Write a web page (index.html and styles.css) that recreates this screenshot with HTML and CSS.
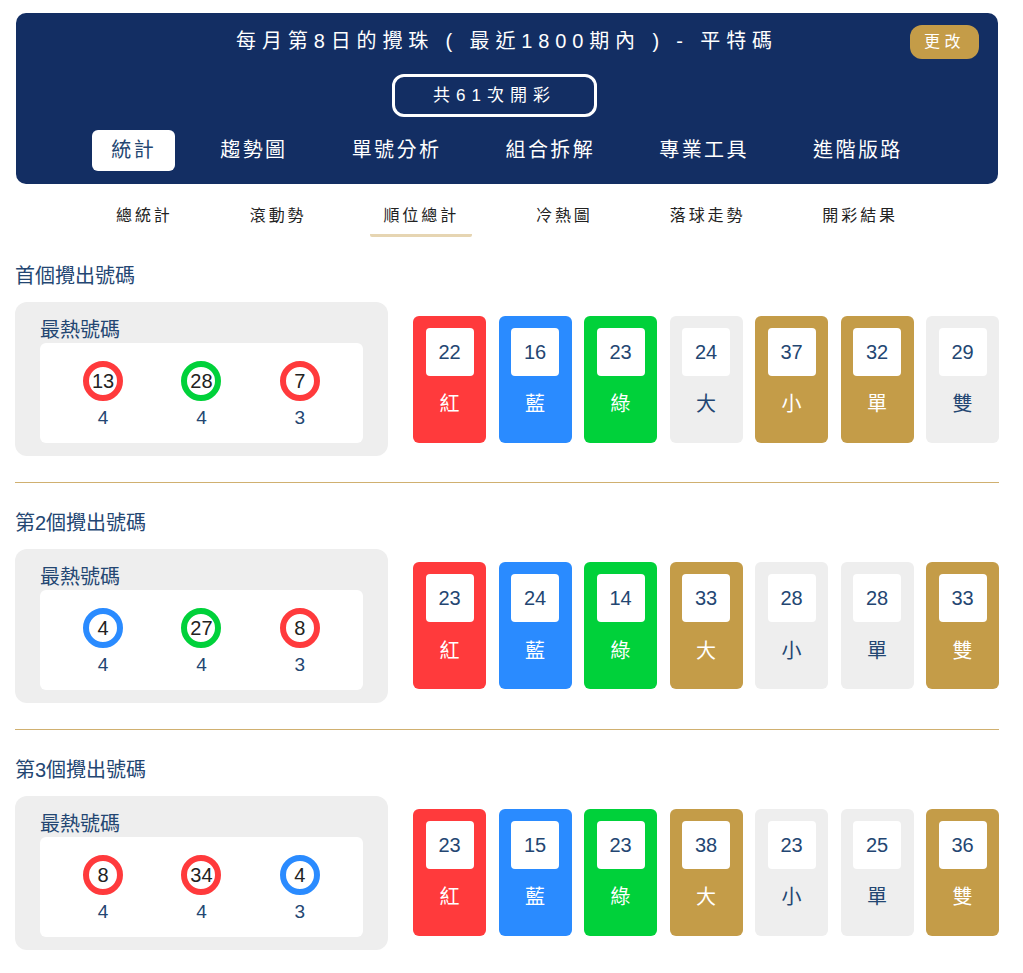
FILE: index.html
```html
<!DOCTYPE html>
<html lang="zh-Hant">
<head>
    <meta charset="UTF-8">
    <meta name="viewport" content="width=device-width, initial-scale=1.0">
    <title>順位總計</title>
    <link rel="stylesheet" href="styles.css">
</head>
<body>
<header class="head-box">
	<div class="head-title">每月第8日的攪珠 ( 最近1800期內 ) - 平特碼</div>
	<a class="change-btn">更改</a>
	<div class="head-count"><span class="count-pill">共61次開彩</span></div>
	<nav class="main-nav">
		<a class="main-item active">統計</a>
		<a class="main-item">趨勢圖</a>
		<a class="main-item">單號分析</a>
		<a class="main-item">組合拆解</a>
		<a class="main-item">專業工具</a>
		<a class="main-item">進階版路</a>
	</nav>
</header>
<nav class="sub-nav">
	<a class="sub-item">總統計</a>
	<a class="sub-item">滾動勢</a>
	<a class="sub-item active">順位總計</a>
	<a class="sub-item">冷熱圖</a>
	<a class="sub-item">落球走勢</a>
	<a class="sub-item">開彩結果</a>
</nav>

<section class="rank-box">
	<h2 class="rank-title">首個攪出號碼</h2>
	<div class="rank-row">
		<div class="hot-box">
			<div class="hot-title">最熱號碼</div>
			<ul class="hot-list">
				<li class="hot-item"><span class="ball red">13</span><span class="hot-times">4</span></li>
				<li class="hot-item"><span class="ball green">28</span><span class="hot-times">4</span></li>
				<li class="hot-item"><span class="ball red">7</span><span class="hot-times">3</span></li>
			</ul>
		</div>
		<ul class="tile-list">
			<li class="tile bg-red"><span class="tile-num">22</span><span class="tile-name">紅</span></li>
			<li class="tile bg-blue"><span class="tile-num">16</span><span class="tile-name">藍</span></li>
			<li class="tile bg-green"><span class="tile-num">23</span><span class="tile-name">綠</span></li>
			<li class="tile"><span class="tile-num">24</span><span class="tile-name">大</span></li>
			<li class="tile bg-gold"><span class="tile-num">37</span><span class="tile-name">小</span></li>
			<li class="tile bg-gold"><span class="tile-num">32</span><span class="tile-name">單</span></li>
			<li class="tile"><span class="tile-num">29</span><span class="tile-name">雙</span></li>
		</ul>
	</div>
</section>

<section class="rank-box">
	<h2 class="rank-title">第2個攪出號碼</h2>
	<div class="rank-row">
		<div class="hot-box">
			<div class="hot-title">最熱號碼</div>
			<ul class="hot-list">
				<li class="hot-item"><span class="ball blue">4</span><span class="hot-times">4</span></li>
				<li class="hot-item"><span class="ball green">27</span><span class="hot-times">4</span></li>
				<li class="hot-item"><span class="ball red">8</span><span class="hot-times">3</span></li>
			</ul>
		</div>
		<ul class="tile-list">
			<li class="tile bg-red"><span class="tile-num">23</span><span class="tile-name">紅</span></li>
			<li class="tile bg-blue"><span class="tile-num">24</span><span class="tile-name">藍</span></li>
			<li class="tile bg-green"><span class="tile-num">14</span><span class="tile-name">綠</span></li>
			<li class="tile bg-gold"><span class="tile-num">33</span><span class="tile-name">大</span></li>
			<li class="tile"><span class="tile-num">28</span><span class="tile-name">小</span></li>
			<li class="tile"><span class="tile-num">28</span><span class="tile-name">單</span></li>
			<li class="tile bg-gold"><span class="tile-num">33</span><span class="tile-name">雙</span></li>
		</ul>
	</div>
</section>

<section class="rank-box">
	<h2 class="rank-title">第3個攪出號碼</h2>
	<div class="rank-row">
		<div class="hot-box">
			<div class="hot-title">最熱號碼</div>
			<ul class="hot-list">
				<li class="hot-item"><span class="ball red">8</span><span class="hot-times">4</span></li>
				<li class="hot-item"><span class="ball red">34</span><span class="hot-times">4</span></li>
				<li class="hot-item"><span class="ball blue">4</span><span class="hot-times">3</span></li>
			</ul>
		</div>
		<ul class="tile-list">
			<li class="tile bg-red"><span class="tile-num">23</span><span class="tile-name">紅</span></li>
			<li class="tile bg-blue"><span class="tile-num">15</span><span class="tile-name">藍</span></li>
			<li class="tile bg-green"><span class="tile-num">23</span><span class="tile-name">綠</span></li>
			<li class="tile bg-gold"><span class="tile-num">38</span><span class="tile-name">大</span></li>
			<li class="tile"><span class="tile-num">23</span><span class="tile-name">小</span></li>
			<li class="tile"><span class="tile-num">25</span><span class="tile-name">單</span></li>
			<li class="tile bg-gold"><span class="tile-num">36</span><span class="tile-name">雙</span></li>
		</ul>
	</div>
</section>
</body>
</html>
```

FILE: styles.css
```css
*{
	padding:0;margin:0;box-sizing:border-box;
}
body{
	font-family:"Liberation Sans","Noto Sans CJK TC",sans-serif;
	color:#234672;
	background:#fff;
	padding:13px 24px 0 15px;
}
ul{list-style:none}

.head-box{
	position:relative;
	height:171px;
	margin-left:1px;
	margin-right:1px;
	padding-top:13px;
	background:#132e63;
	border-radius:10px;
	color:#fff;
}
.head-title{
	height:30px;
	line-height:30px;
	text-align:center;
	font-size:20px;
	letter-spacing:5.87px;
}
.change-btn{
	position:absolute;
	top:12px;right:19px;
	width:69px;height:34px;
	line-height:34px;
	text-align:center;
	font-size:16px;
	letter-spacing:4.5px;
	background:#c49c48;
	border-radius:12px;
}
.head-count{
	display:flex;
	justify-content:center;
	margin-top:18px;
	padding-right:25px;
}
.count-pill{
	width:205px;height:43px;
	line-height:37px;
	text-align:center;
	font-size:17px;
	letter-spacing:6px;
	border:3px solid #fff;
	border-radius:12px;
}
.main-nav{
	display:flex;
	justify-content:center;
	gap:26.2px;
	margin-top:13px;
}
.main-item{
	height:41px;
	line-height:41px;
	padding:0 19px;
	font-size:20px;
	letter-spacing:2.4px;
	border-radius:6px;
}
.main-item.active{background:#fff;color:#234672;}

.sub-nav{
	display:flex;
	justify-content:center;
	gap:51px;
	height:52.4px;
	padding-top:8px;
}
.sub-item{
	height:45px;
	line-height:48px;
	padding:0 13px;
	font-size:16px;
	letter-spacing:2.9px;
	color:#222;
}
.sub-item.active{border-bottom:3px solid #e6d5b2;border-radius:2px;}

.rank-box{
	height:246.7px;
	padding-top:25px;
	border-bottom:1px solid #d0b070;
}
.rank-box:last-child{border-bottom:0;}
.rank-title{
	height:30px;
	line-height:30px;
	font-size:20px;
	font-weight:400;
}
.rank-row{
	display:flex;
	justify-content:space-between;
	margin-top:11px;
}
.hot-box{
	width:373px;height:154px;
	padding:16px 25px 0 25px;
	background:#eee;
	border-radius:12px;
}
.hot-title{
	height:25px;
	line-height:25px;
	font-size:20px;
}
.hot-list{
	display:flex;
	justify-content:center;
	height:100px;
	padding-top:18px;
	gap:0;
	background:#fff;
	border-radius:6px;
}
.hot-item{
	width:98.4px;
	display:flex;
	flex-direction:column;
	align-items:center;
	font-size:19px;
}
.ball{
	width:40px;height:40px;
	line-height:28px;
	text-align:center;
	font-size:20px;
	color:#222;
	background:#fff;
	border:6px solid #ff3a3c;
	border-radius:50%;
}
.ball.red{border-color:#ff3a3c;}
.ball.green{border-color:#00d13a;}
.ball.blue{border-color:#2a8bff;}
.hot-times{
	margin-top:6px;
	line-height:22px;
}

.tile-list{
	display:flex;
	justify-content:space-between;
	width:586px;
	padding-top:13.2px;
}
.tile{
	width:73px;height:127px;
	padding-top:12px;
	background:#eee;
	border-radius:6px;
	text-align:center;
}
.tile-num{
	display:block;
	width:48px;height:48px;
	margin:0 auto;
	line-height:48px;
	font-size:20px;
	background:#fff;
	border-radius:4px;
}
.tile-name{
	display:block;
	margin-top:14.5px;
	line-height:28px;
	font-size:20px;
}
.bg-red{background:#ff3a3c;color:#fff;}
.bg-blue{background:#2a8bff;color:#fff;}
.bg-green{background:#00d13a;color:#fff;}
.bg-gold{background:#c49c48;color:#fff;}
.tile .tile-num{color:#234672;}
```
